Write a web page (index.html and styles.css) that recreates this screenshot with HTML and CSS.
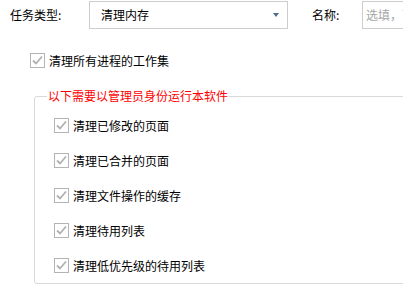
FILE: index.html
```html
<!DOCTYPE html>
<html lang="zh">
<head>
<meta charset="utf-8">
<link rel="stylesheet" href="styles.css">
</head>
<body>
<div class="page">
  <div class="top-row">
    <span class="label">任务类型:</span>
    <div class="select">
      <span class="select-text">清理内存</span>
      <span class="arrow"></span>
    </div>
    <span class="label name-label">名称:</span>
    <div class="input"><span class="placeholder">选填，可不填</span></div>
  </div>

  <label class="check-row main-check">
    <span class="box"><svg viewBox="0 0 13 13" width="13" height="13"><polyline points="2,6.5 5,9.5 11,2.5" fill="none" stroke="#b0b0b0" stroke-width="1.8"/></svg></span>
    <span class="check-text">清理所有进程的工作集</span>
  </label>

  <fieldset class="group">
    <legend class="group-title">以下需要以管理员身份运行本软件</legend>
    <div class="group-body">
      <label class="check-row">
        <span class="box"><svg viewBox="0 0 13 13" width="13" height="13"><polyline points="2,6.5 5,9.5 11,2.5" fill="none" stroke="#b0b0b0" stroke-width="1.8"/></svg></span>
        <span class="check-text">清理已修改的页面</span>
      </label>
      <label class="check-row">
        <span class="box"><svg viewBox="0 0 13 13" width="13" height="13"><polyline points="2,6.5 5,9.5 11,2.5" fill="none" stroke="#b0b0b0" stroke-width="1.8"/></svg></span>
        <span class="check-text">清理已合并的页面</span>
      </label>
      <label class="check-row">
        <span class="box"><svg viewBox="0 0 13 13" width="13" height="13"><polyline points="2,6.5 5,9.5 11,2.5" fill="none" stroke="#b0b0b0" stroke-width="1.8"/></svg></span>
        <span class="check-text">清理文件操作的缓存</span>
      </label>
      <label class="check-row">
        <span class="box"><svg viewBox="0 0 13 13" width="13" height="13"><polyline points="2,6.5 5,9.5 11,2.5" fill="none" stroke="#b0b0b0" stroke-width="1.8"/></svg></span>
        <span class="check-text">清理待用列表</span>
      </label>
      <label class="check-row">
        <span class="box"><svg viewBox="0 0 13 13" width="13" height="13"><polyline points="2,6.5 5,9.5 11,2.5" fill="none" stroke="#b0b0b0" stroke-width="1.8"/></svg></span>
        <span class="check-text">清理低优先级的待用列表</span>
      </label>
    </div>
  </fieldset>
</div>
</body>
</html>
```

FILE: styles.css
```css
html, body {
  margin: 0;
  padding: 0;
  overflow: hidden;
  background: #ffffff;
}

body {
  font-family: "Noto Sans CJK SC", "Noto Sans", sans-serif;
  font-size: 12px;
  color: #000000;
  width: 403px;
  height: 296px;
}

.page {
  display: flex;
  flex-direction: column;
  width: 460px;
}

.top-row {
  display: flex;
  align-items: center;
  margin-top: 1px;
  height: 28px;
  padding-left: 10px;
}

.label {
  width: 79px;
  line-height: 16px;
  flex: none;
}

.name-label {
  width: 50px;
  margin-left: 24px;
}

.select {
  box-sizing: border-box;
  width: 199px;
  height: 28px;
  border: 1px solid #cdcdcd;
  display: flex;
  align-items: center;
  justify-content: space-between;
  padding: 0 8px 0 11px;
  flex: none;
}

.select-text {
  line-height: 16px;
}

.arrow {
  width: 0;
  height: 0;
  border-left: 3px solid transparent;
  border-right: 3px solid transparent;
  border-top: 4px solid #4f6d8d;
  margin-top: -1px;
}

.input {
  box-sizing: border-box;
  width: 100px;
  height: 28px;
  border: 1px solid #cdcdcd;
  display: flex;
  align-items: center;
  padding-left: 3px;
  overflow: hidden;
  white-space: nowrap;
  flex: none;
}

.placeholder {
  color: #a6a6a6;
  line-height: 16px;
}

.check-row {
  display: flex;
  align-items: center;
  height: 15px;
}

.main-check {
  margin-top: 24px;
  margin-left: 30px;
}

.box {
  box-sizing: border-box;
  width: 15px;
  height: 15px;
  border: 1px solid #b4b4b4;
  background: #ffffff;
  display: flex;
  align-items: center;
  justify-content: center;
  flex: none;
}

.check-text {
  margin-left: 4px;
  line-height: 16px;
  white-space: nowrap;
}

.group {
  margin: 20px 0 0 34px;
  padding: 0;
  border: 1px solid #d9d9d9;
  border-radius: 3px;
  min-width: 0;
  width: 420px;
}

.group-title {
  color: #ff0000;
  line-height: 16px;
  padding: 0 1px;
  margin-left: 12px;
}

.group-body {
  display: flex;
  flex-direction: column;
  gap: 20px;
  padding: 14px 0 10px 19px;
}
```
